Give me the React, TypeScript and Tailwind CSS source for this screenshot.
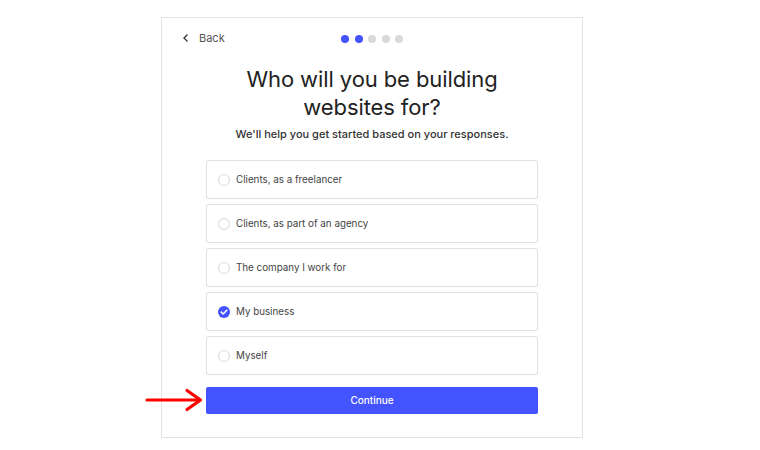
import { useState } from 'react'

const options = [
    'Clients, as a freelancer',
    'Clients, as part of an agency',
    'The company I work for',
    'My business',
    'Myself',
]

function Radio({ checked }: { checked: boolean }) {
    if (checked) {
        return (
            <svg width="12" height="12" viewBox="0 0 12 12" className="shrink-0">
                <circle cx="6" cy="6" r="6" fill="#4353ff" />
                <path d="M3.3 6.2 L5.2 8 L8.8 4.3" fill="none" stroke="#fff" strokeWidth="1.6" strokeLinecap="round" strokeLinejoin="round" />
            </svg>
        )
    }
    return <span className="block w-[12px] h-[12px] shrink-0 rounded-full border border-[#d6d6d6] bg-white" />
}

export default function App() {
    const [selected, setSelected] = useState(3)

    return (
        <div className="w-[760px] h-[450px] bg-white relative font-['Inter',sans-serif] text-[#222]">
            <div className="absolute left-[161px] top-[17px] w-[422px] h-[421px] border border-[#e2e2e2] bg-white flex flex-col">
                <div className="relative h-[40px] flex items-center">
                    <button type="button" className="flex items-center gap-[9px] pl-[20px] text-[11px] text-[#555]">
                        <svg width="8" height="10" viewBox="0 0 8 10">
                            <path d="M5.5 1.5 L2 5 L5.5 8.5" fill="none" stroke="#333" strokeWidth="1.3" />
                        </svg>
                        Back
                    </button>
                    <div className="absolute left-[179px] top-[17px] flex gap-[5.5px]">
                        {[0, 1, 2, 3, 4].map(i => (
                            <span key={i} className={i < 2 ? 'w-[8px] h-[8px] rounded-full bg-[#4353ff]' : 'w-[8px] h-[8px] rounded-full bg-[#d9d9d9]'} />
                        ))}
                    </div>
                </div>

                <h1 className="mt-[7px] text-center text-[22px] leading-[28px] text-[#222] tracking-[-0.1px]">
                    Who will you be building<br />websites for?
                </h1>
                <p className="mt-[5px] text-center text-[11px] leading-[16px] font-medium text-[#333]">
                    We'll help you get started based on your responses.
                </p>

                <div className="mx-[44px] mt-[18px] flex flex-col gap-[5px]">
                    {options.map((o, i) => (
                        <button
                            key={o}
                            type="button"
                            onClick={() => setSelected(i)}
                            className="h-[39px] flex items-center gap-[6px] px-[11px] pt-[1px] border border-[#e0e0e0] rounded-[2px] bg-white text-left text-[9.8px] text-[#444]"
                        >
                            <Radio checked={selected === i} />
                            {o}
                        </button>
                    ))}
                </div>

                <button type="button" className="mx-[44px] mt-[12px] h-[27px] bg-[#4353ff] rounded-[2px] text-white text-[10px] font-medium">
                    Continue
                </button>
            </div>

            <svg className="absolute left-[145px] top-[388px]" width="60" height="24" viewBox="0 0 60 24">
                <path d="M2 12 H54" stroke="#f00" strokeWidth="3.2" strokeLinecap="round" />
                <path d="M42 2.5 L55.5 12 L42 21.5" fill="none" stroke="#f00" strokeWidth="3.2" strokeLinecap="round" strokeLinejoin="round" />
            </svg>
        </div>
    )
}
